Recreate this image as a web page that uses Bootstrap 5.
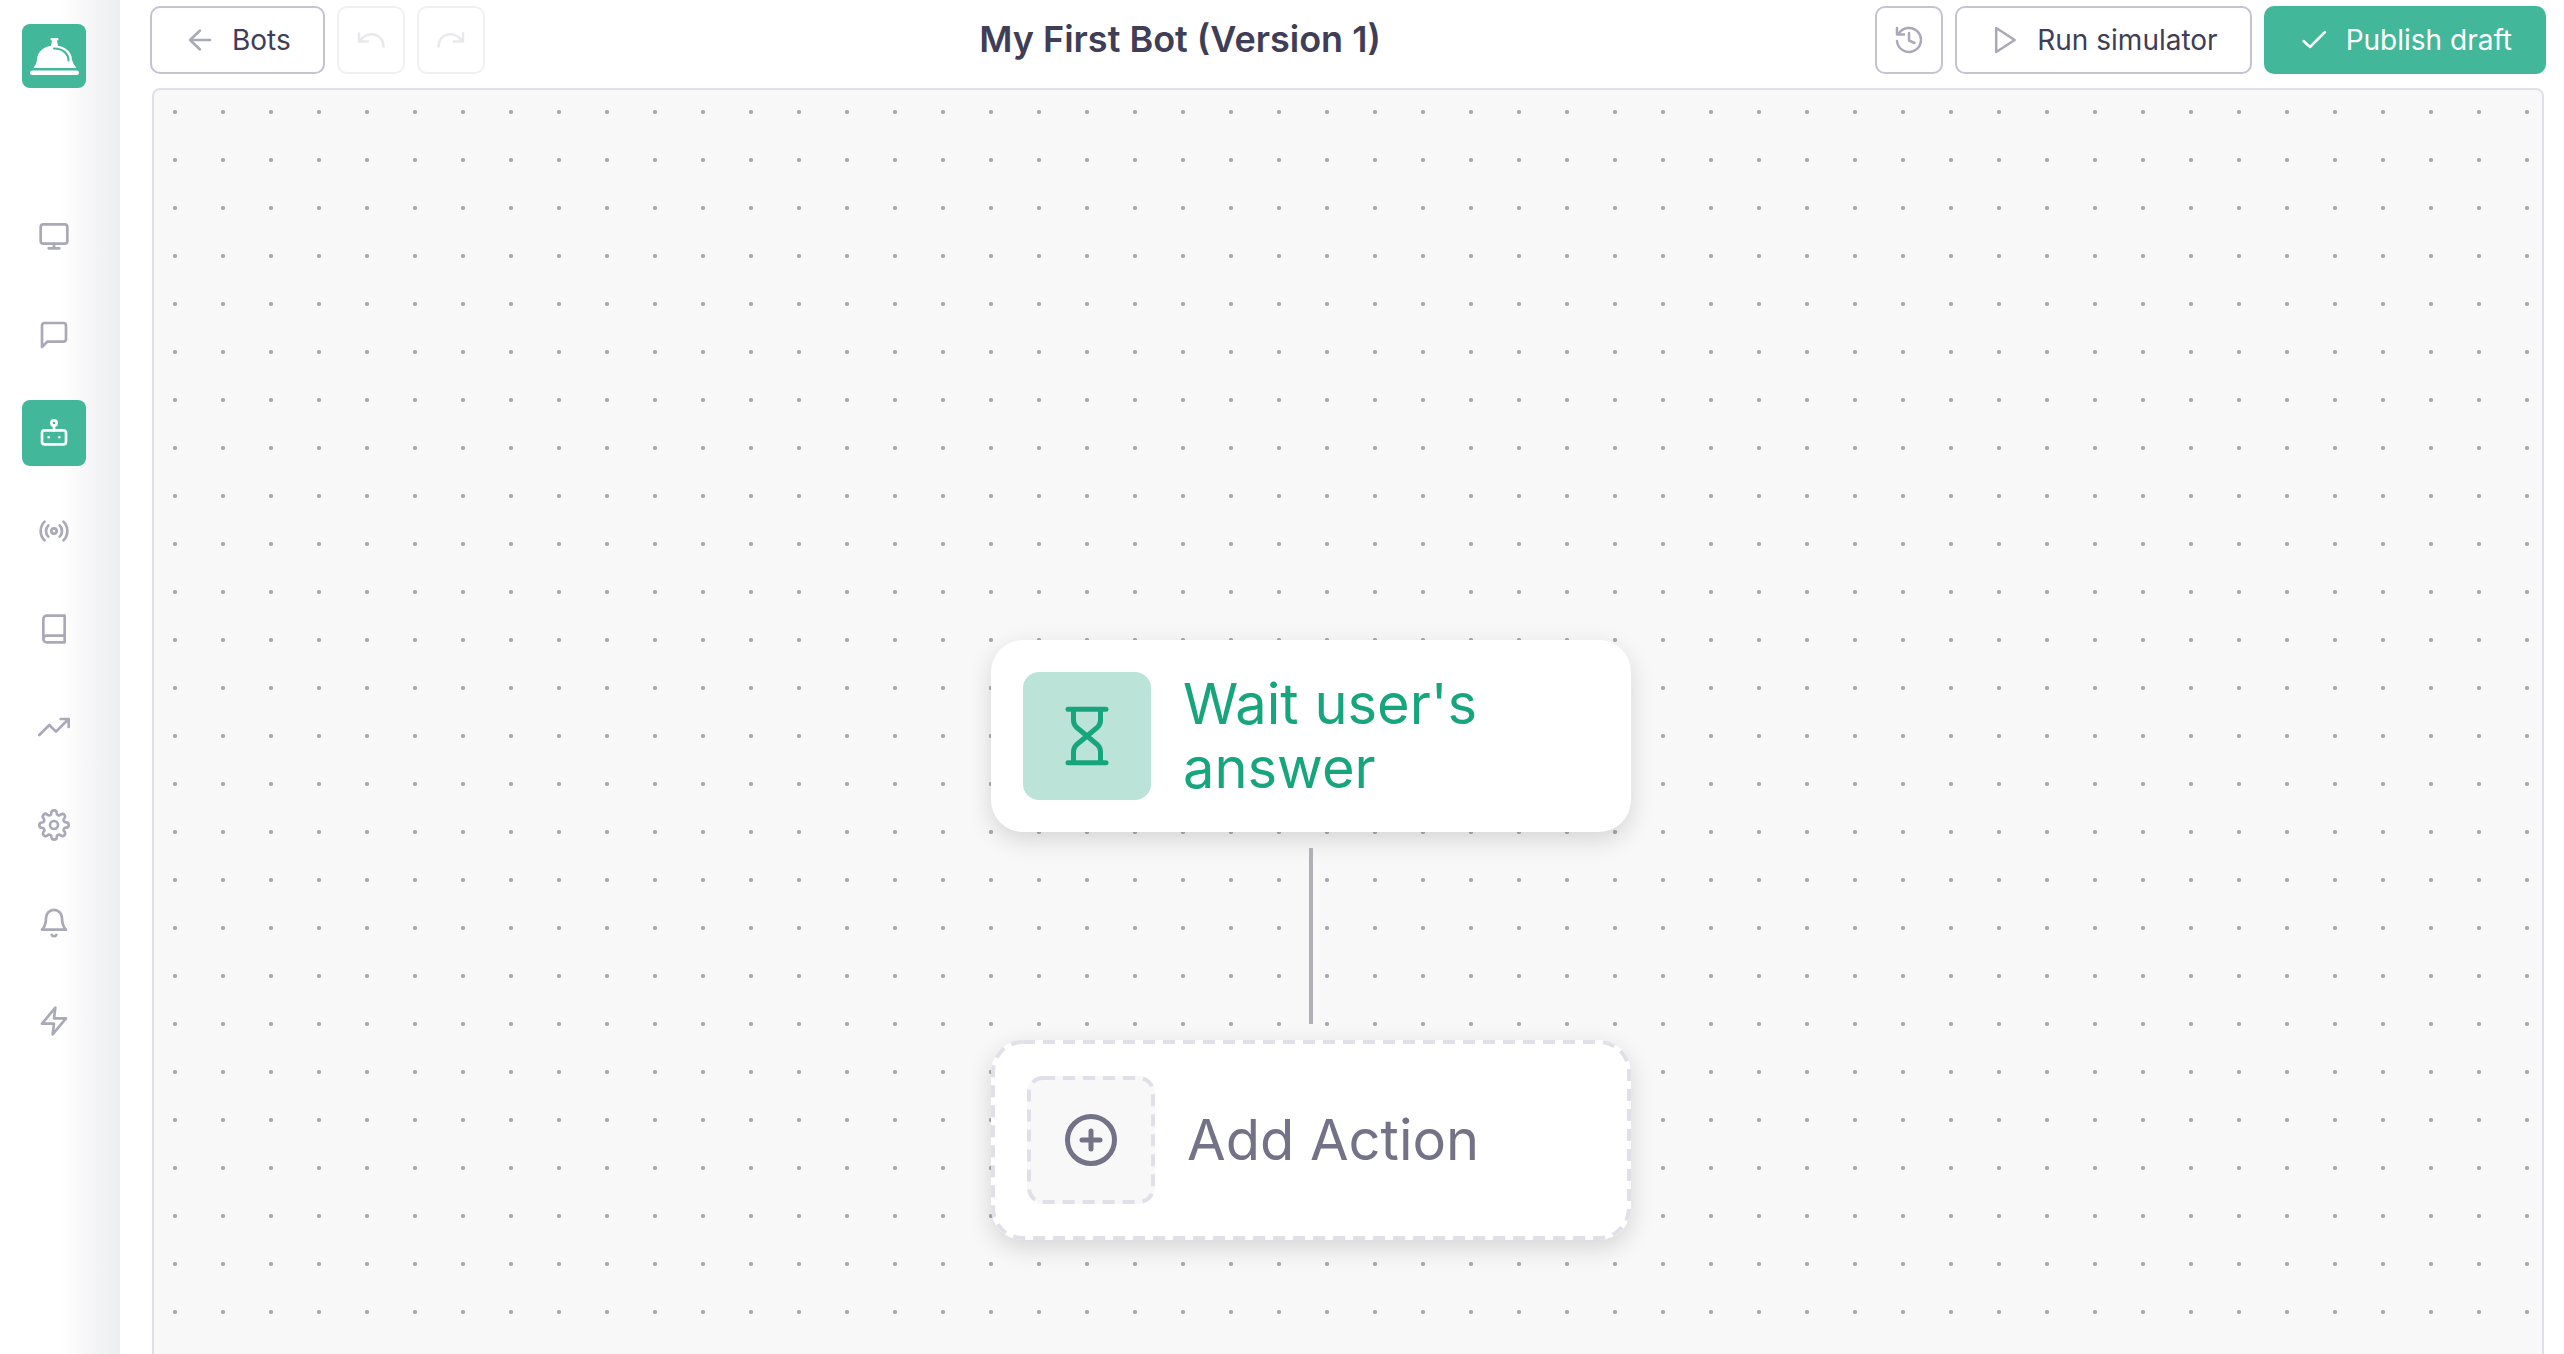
<!DOCTYPE html>
<html lang="en">
<head>
<meta charset="utf-8">
<meta name="viewport" content="width=device-width, initial-scale=1">
<title>My First Bot</title>
<link href="https://cdn.jsdelivr.net/npm/bootstrap@5.3.0/dist/css/bootstrap.min.css" rel="stylesheet">
<style>
:root { --brand: #43b799; --ink: #403d56; --muted: #a9a9b8; --line: #e0e0e8; }
body { font-family: Inter, "Liberation Sans", sans-serif; color: var(--ink); background: #fff; }
svg { display: block; fill: none; stroke: currentColor; stroke-width: 2; stroke-linecap: round; stroke-linejoin: round; }
.rail { width: 120px; padding: 24px 34px 0 22px; background: linear-gradient(90deg, #fff 50%, #f8f8f9 68%, #f1f2f4 88%, #ecedee); }
.brand-logo { width: 64px; height: 64px; border-radius: 8px; background: var(--brand); color: #fff; margin-bottom: 116px; }
.rail-list { gap: 32px; }
.rail-link { width: 64px; height: 66px; border-radius: 8px; color: var(--muted); }
.rail-link svg { width: 32px; height: 32px; }
.rail-link.active { background: var(--brand); color: #fff; }
.workspace { padding: 6px 18px 0 30px; }
.topbar { gap: 12px; }
.tool { height: 68px; border: 2px solid #c4c3d1; border-radius: 10px; font-size: 28px; line-height: 32px; color: var(--ink); padding: 0 32px; gap: 16px; --bs-btn-disabled-border-color: #c4c3d1; }
.tool svg { width: 32px; height: 32px; color: var(--muted); stroke-width: 2.5; }
.tool-square { width: 68px; padding: 0; }
.tool:disabled { opacity: .25; }
.tool-primary, .tool-primary:hover { background: var(--brand); border-color: var(--brand); color: #fff; }
.tool-primary svg { color: #fff; }
.bot-title { font-size: 36px; line-height: 44px; font-weight: 600; padding-bottom: 2px; }
.board { margin: 14px 2px 0; border: 2px solid var(--line); border-bottom: 0; border-radius: 8px 8px 0 0; background: #f8f8f8 radial-gradient(circle, var(--muted) 1.8px, transparent 2.5px) -3px -2px / 48px 48px; }
.flow { left: 837px; top: 550px; width: 640px; }
.node { border: 0; border-radius: 32px; background: #fff; padding: 32px; gap: 32px; font-size: 56px; line-height: 64px; box-shadow: 0 8px 24px rgba(0,0,0,.14); }
.node-wait { color: #17a57e; }
.node-add { padding: 36px; color: #737287; }
.node-icon { width: 128px; height: 128px; border-radius: 16px; }
.node-icon .glyph { width: 64px; height: 64px; stroke-width: 5; }
.node-wait .node-icon { background: #bce3d7; }
.node-add .node-icon { background: #f8f8f8; }
.dashes { stroke: var(--line); stroke-width: 4; stroke-linecap: butt; stroke-dasharray: 12 8; pointer-events: none; }
.dashes rect { width: calc(100% - 4px); height: calc(100% - 4px); }
.wire { width: 4px; height: 176px; margin: 16px auto; background: #b0b0b5; }
</style>
</head>
<body>
<div class="d-flex vh-100 overflow-hidden">
  <nav class="rail flex-shrink-0" aria-label="Main">
    <a href="#" class="brand-logo d-block" aria-label="Home">
      <svg viewBox="0 0 64 64" width="64" height="64">
        <g fill="currentColor" stroke="none">
          <path d="M29 14h7q1.500 2-1 2.500l1 5.500h-7l1-5.500q-2.500-.5-1-2.500z"/>
          <path d="M15 36C15 27 23 21.500 32.500 21.500S50 27 50 36q1 4 4.500 8h-43q3-4 3.500-8z"/>
          <rect x="8" y="46.500" width="49" height="4.600" rx="2.300"/>
        </g>
        <path d="M32 24.500c8.500 0 14.500 5 14.500 12" stroke="#43b799"/>
      </svg>
    </a>
    <div class="rail-list d-flex flex-column">
      <a href="#" class="rail-link d-flex align-items-center justify-content-center" aria-label="Dashboard"><svg viewBox="0 0 24 24"><rect x="2" y="2.500" width="20" height="14.500" rx="2"/><path d="M8 20.500h8M12 17v3.500"/></svg></a>
      <a href="#" class="rail-link d-flex align-items-center justify-content-center" aria-label="Chats"><svg viewBox="0 0 24 24"><path d="M21 15a2 2 0 0 1-2 2H7l-4 4V5a2 2 0 0 1 2-2h14a2 2 0 0 1 2 2z"/></svg></a>
      <a href="#" class="rail-link active d-flex align-items-center justify-content-center" aria-label="Bots" aria-current="page"><svg viewBox="0 0 24 24"><rect x="3" y="10" width="18" height="10.500" rx="2"/><circle cx="12" cy="4.500" r="2"/><path d="M12 6.500V10M8 15.200v.01M16 15.200v.01"/></svg></a>
      <a href="#" class="rail-link d-flex align-items-center justify-content-center" aria-label="Broadcasts"><svg viewBox="0 0 24 24"><circle cx="12" cy="12" r="2"/><path d="M16.240 7.760a6 6 0 0 1 0 8.490M7.760 16.240a6 6 0 0 1 0-8.490M19.070 4.930a10 10 0 0 1 0 14.140M4.930 19.070a10 10 0 0 1 0-14.140"/></svg></a>
      <a href="#" class="rail-link d-flex align-items-center justify-content-center" aria-label="Library"><svg viewBox="0 0 24 24"><path d="M4 19.500A2.500 2.500 0 0 1 6.500 17H20M6.500 2H20v20H6.500A2.500 2.500 0 0 1 4 19.500v-15A2.500 2.500 0 0 1 6.500 2z"/></svg></a>
      <a href="#" class="rail-link d-flex align-items-center justify-content-center" aria-label="Analytics"><svg viewBox="0 0 24 24"><path d="M23 6l-9.500 9.500-5-5L1 18M17 6h6v6"/></svg></a>
      <a href="#" class="rail-link d-flex align-items-center justify-content-center" aria-label="Settings"><svg viewBox="0 0 24 24"><circle cx="12" cy="12" r="3"/><path d="M19.400 15a1.650 1.650 0 0 0 .33 1.820l.06.06a2 2 0 1 1-2.830 2.830l-.06-.06a1.650 1.650 0 0 0-2.800 1.180V21a2 2 0 0 1-4 0v-.09A1.650 1.650 0 0 0 9 19.400a1.650 1.650 0 0 0-1.820.33l-.06.06a2 2 0 1 1-2.830-2.830l.06-.06a1.650 1.650 0 0 0-1.180-2.800H3a2 2 0 0 1 0-4h.09A1.650 1.650 0 0 0 4.600 9a1.650 1.650 0 0 0-.33-1.820l-.06-.06a2 2 0 1 1 2.830-2.830l.06.06A1.650 1.650 0 0 0 9 4.680 1.650 1.650 0 0 0 10 3.170V3a2 2 0 0 1 4 0v.09a1.650 1.650 0 0 0 2.820 1.180l.06-.06a2 2 0 1 1 2.830 2.830l-.06.06A1.650 1.650 0 0 0 19.400 9a1.650 1.650 0 0 0 1.510 1H21a2 2 0 0 1 0 4h-.09a1.650 1.650 0 0 0-1.510 1z"/></svg></a>
      <a href="#" class="rail-link d-flex align-items-center justify-content-center" aria-label="Notifications"><svg viewBox="0 0 24 24"><path d="M3 17h18C19 15 18 12 18 8.200A6 6 0 0 0 6 8.200C6 12 5 15 3 17M10.300 21a2 2 0 0 0 3.400 0"/></svg></a>
      <a href="#" class="rail-link d-flex align-items-center justify-content-center" aria-label="Integrations"><svg viewBox="0 0 24 24"><path d="M13 2L3 14h9l-1 8 10-12h-9l1-8z"/></svg></a>
    </div>
  </nav>
  <main class="workspace flex-grow-1 d-flex flex-column">
    <header class="topbar d-flex align-items-center">
      <button type="button" class="btn tool d-flex align-items-center"><svg viewBox="0 0 32 32"><path d="M26 16H6M16 6.500L6 16l10 9.500"/></svg>Bots</button>
      <button type="button" class="btn tool tool-square d-flex align-items-center justify-content-center" aria-label="Undo" disabled><svg viewBox="0 0 32 32"><path d="M4 9.500v8h9M5 17C12 6.500 28 8.500 28.500 22.500"/></svg></button>
      <button type="button" class="btn tool tool-square d-flex align-items-center justify-content-center" aria-label="Redo" disabled><svg viewBox="0 0 32 32"><path d="M28 9.500v8h-9M27 17C20 6.500 4 8.500 3.500 22.500"/></svg></button>
      <h1 class="bot-title flex-grow-1 text-center mb-0">My First Bot (Version 1)</h1>
      <button type="button" class="btn tool tool-square d-flex align-items-center justify-content-center" aria-label="History"><svg viewBox="0 0 32 32"><path d="M4 4v6.500h7M5.500 10A12 12 0 1 1 4 17M16 9v7.500l5.500 2.500"/></svg></button>
      <button type="button" class="btn tool d-flex align-items-center"><svg viewBox="0 0 32 32"><path d="M7.200 4v24l18.500-12z"/></svg>Run simulator</button>
      <button type="button" class="btn tool tool-primary d-flex align-items-center"><svg viewBox="0 0 32 32"><path d="M5.500 17l6.500 6L27 8"/></svg>Publish draft</button>
    </header>
    <section class="board flex-grow-1 position-relative overflow-hidden" aria-label="Bot flow">
      <div class="flow position-absolute">
        <div class="node node-wait d-flex align-items-center">
          <div class="node-icon flex-shrink-0 d-flex align-items-center justify-content-center"><svg class="glyph" viewBox="0 0 64 64"><path d="M13 5.300h38M13 58.700h38M18.500 5.300v11q0 4 3 7l21 17.400q3 3 3 7v11M45.500 5.300v11q0 4-3 7l-21 17.400q-3 3-3 7v11"/></svg></div>
          <span>Wait user's answer</span>
        </div>
        <div class="wire"></div>
        <button type="button" class="node node-add position-relative w-100 text-start d-flex align-items-center">
          <svg class="dashes position-absolute top-0 start-0 w-100 h-100"><rect x="2" y="2" rx="30"/></svg>
          <span class="node-icon position-relative flex-shrink-0 d-flex align-items-center justify-content-center">
            <svg class="dashes position-absolute top-0 start-0 w-100 h-100"><rect x="2" y="2" rx="14"/></svg>
            <svg class="glyph" viewBox="0 0 64 64"><circle cx="32" cy="32" r="23.500"/><path d="M32 23v18M23 32h18"/></svg>
          </span>
          <span>Add Action</span>
        </button>
      </div>
    </section>
  </main>
</div>
<script src="https://cdn.jsdelivr.net/npm/bootstrap@5.3.0/dist/js/bootstrap.bundle.min.js"></script>
</body>
</html>
